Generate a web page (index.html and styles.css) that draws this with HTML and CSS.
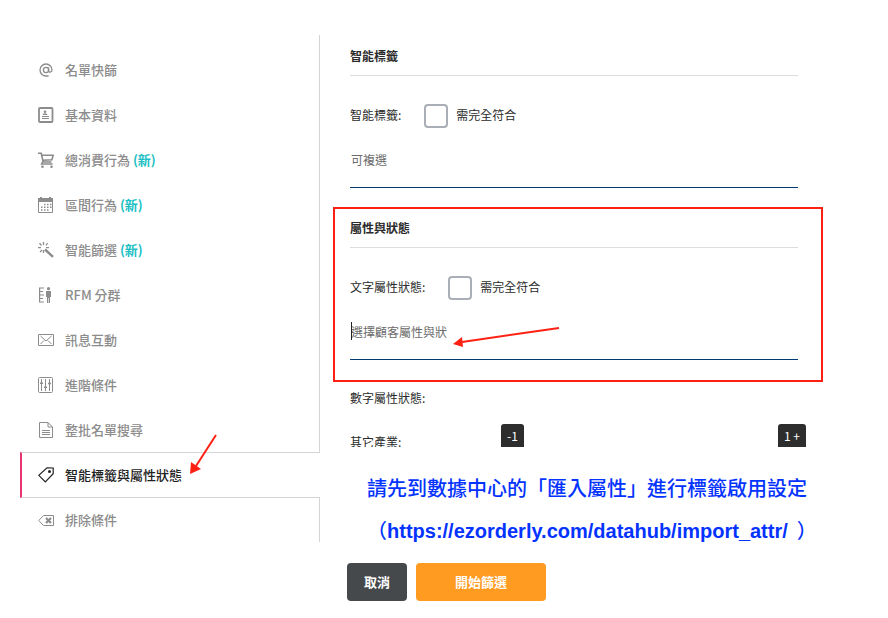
FILE: index.html
```html
<!DOCTYPE html>
<html lang="zh-Hant">
<head>
<meta charset="utf-8">
<title>智能標籤與屬性狀態</title>
<link rel="stylesheet" href="styles.css">
</head>
<body>
<div class="page">
  <nav class="sidebar">
    <a class="item" href="#"><svg class="icon" viewBox="0 0 16 16"><g stroke-width="1.3"><circle cx="8" cy="8" r="2.6"/><path d="M10.6 5.4v3.4c0 2 3.4 1.7 3.4-.8a6 6 0 1 0-6 6h2.6"/></g></svg>名單快篩</a>
    <a class="item" href="#"><svg class="icon" viewBox="0 0 16 16"><rect x="1" y="1" width="13.500" height="14" rx="1" stroke-width="1.800"/><circle cx="7" cy="4.7" r="1.3" class="fill"/><path class="fill" d="M4.500 8q0-1.800 2.500-1.800T9.500 8z"/><path d="M4 9.500h7M4 11.500h7"/></svg>基本資料</a>
    <a class="item" href="#"><svg class="icon" viewBox="0 0 16 16"><path stroke-width="1.600" d="M0 1.200h3.200l2 8.800h8.300M4 3.200h11.200l-1.300 4.600L5 8.300M4.800 9.500 3.600 12h11"/><circle class="fill" cx="4.500" cy="14.700" r="1.300"/><circle class="fill" cx="13.500" cy="14.700" r="1.300"/></svg><span>總消費行為 <b class="new">(新)</b></span></a>
    <a class="item" href="#"><svg class="icon" viewBox="0 0 16 16"><path d="M.5 1.500h14v14H.5z"/><path class="fill" d="M0 1h2V0h2v1h7V0h2v1h2v4H0z"/><path stroke-width="1.500" stroke-dasharray="1.500 1.500" d="M6 7.500h7.500M3 10.200h10.500M3 13h7.500"/></svg><span>區間行為 <b class="new">(新)</b></span></a>
    <a class="item" href="#"><svg class="icon" viewBox="0 0 16 16"><path stroke-width="2.400" d="m7 7.500 8 7.300"/><path stroke-width="1.300" d="M5.500 0v3M9.500 1.200 8 3.500M1.500 1.300l2 2.200M0 5.700h3M8 5.700h3M2 10l2-2M5.500 8v3"/></svg><span>智能篩選 <b class="new">(新)</b></span></a>
    <a class="item" href="#"><svg class="icon" viewBox="0 0 16 16"><path stroke-width="1.200" d="M6 1H1.600v14H6M2 4.500h3M2 8h4M2 11.500h3"/><circle class="fill" cx="10.500" cy="1.700" r="1.600"/><path class="fill" d="M8 4h5v6h-1v6h-1.200v-5h-.6v5H9v-6H8z"/></svg>RFM 分群</a>
    <a class="item" href="#"><svg class="icon" viewBox="0 0 16 16"><path d="M.5 2.500h15v11H.5zM2.500 4l5.500 5 5.500-5M2.500 12l3.500-3.500M13.500 12 10 8.500"/></svg>訊息互動</a>
    <a class="item" href="#"><svg class="icon" viewBox="0 0 16 16"><rect x=".5" y=".5" width="14" height="15" rx="1"/><path d="M3.500 2v12M7.500 2v12M11.500 2v12M2 6.500h3M6 10.500h3M10 6.500h3"/><path stroke-width="2" d="M2.500 6h2M6.500 10h2M10.500 6.500h2"/></svg>進階條件</a>
    <a class="item" href="#"><svg class="icon" viewBox="0 0 16 16"><path d="M1.500.5H10l4.500 4.500v10.500h-13zM10 .5V5h4.500M4 8.500h8M4 10.500h8M4 12.500h8"/></svg>整批名單搜尋</a>
    <a class="item active" href="#" aria-current="page"><svg class="icon" viewBox="0 0 16 16"><path stroke-width="1.200" d="M9 .8 15.200 1v5.700L7.300 15 .8 8.300z"/><circle class="fill" cx="11.500" cy="4.500" r="1.500"/></svg>智能標籤與屬性狀態</a>
    <a class="item" href="#"><svg class="icon" viewBox="0 0 16 16"><path d="M5.500 3.500h10v10h-10L.8 8.500z"/><path stroke-width="2.200" d="m8 6 5 5m0-5-5 5"/></svg>排除條件</a>
    <svg class="arrow arrow-nav" viewBox="0 0 30 44"><path class="shaft" d="M27 2 7 33"/><path class="head" d="m1 41 1-12 10 7z"/></svg>
  </nav>
  <main class="main">
    <form class="filters" id="filters">
      <section class="group">
        <h2>智能標籤</h2>
        <div class="row"><span class="label">智能標籤:</span><label class="check"><input type="checkbox"><span class="label">需完全符合</span></label></div>
        <input class="field" type="text" placeholder="可複選" aria-label="智能標籤">
      </section>
      <section class="group marked">
        <h2>屬性與狀態</h2>
        <div class="row"><span class="label">文字屬性狀態:</span><label class="check"><input type="checkbox"><span class="label">需完全符合</span></label></div>
        <div class="focus"><input class="field" type="text" placeholder="選擇顧客屬性與狀" aria-label="文字屬性狀態"></div>
        <svg class="arrow arrow-field" viewBox="0 0 110 22"><path class="shaft" d="M107 3 10 17"/><path class="head" d="m1 19 9-7 1 10z"/></svg>
      </section>
      <p class="numeric">數字屬性狀態:</p>
      <div class="industry"><span class="name">其它產業:</span><div class="range"><span class="tip">-1</span><span class="tip">1 +</span></div></div>
    </form>
    <p class="note">請先到數據中心的「匯入屬性」進行標籤啟用設定<br>（<a href="https://ezorderly.com/datahub/import_attr/">https://ezorderly.com/datahub/import_attr/</a>&nbsp; ）</p>
    <div class="actions"><button class="cancel" type="button">取消</button><button class="submit" type="submit" form="filters">開始篩選</button></div>
  </main>
</div>
</body>
</html>
```
FILE: styles.css
```css
* { box-sizing: border-box; }
body {
  margin: 0;
  background: #fff;
  color: #2b2b2b;
  font-family: "Noto Sans CJK TC", sans-serif;
  font-size: 12px;
  line-height: 24px;
}
h2, p { margin: 0; }
button, input { font: inherit; }
.page { display: flex; align-items: flex-start; padding: 35px 65px 16px 20px; }

.sidebar { position: relative; flex: 0 0 300px; padding-top: 12px; }
.sidebar::before { content: ""; position: absolute; inset: 0 0 0 auto; width: 1px; background: #d4d4d4; }
.item {
  position: relative;
  display: flex;
  align-items: center;
  gap: 11px;
  height: 45px;
  padding-left: 18px;
  color: #8c8c8c;
  font-size: 13px;
  font-weight: 500;
  text-decoration: none;
}
.icon { width: 16px; height: 16px; fill: none; stroke: currentColor; }
.icon .fill { fill: currentColor; stroke: none; }
.new { color: #1cbfc4; font-weight: 700; }
.active {
  height: 46px;
  margin-bottom: -1px;
  padding-left: 16px;
  border: solid #d4d4d4;
  border-width: 1px 0;
  border-left: 2px solid #e6356f;
  background: #fff;
  color: #222;
}

.main { flex: 1; min-width: 0; padding-left: 27px; }
.filters { height: 412px; margin: 0 -8px 0 -17px; padding: 1px 33px 0 20px; overflow: hidden; }
.group { position: relative; margin-bottom: 20px; }
.group h2 { height: 40px; padding-top: 8px; border-bottom: 1px solid #ddd; font-size: 12px; font-weight: 700; }
.row { display: flex; align-items: center; gap: 23px; margin-top: 28px; }
.label { padding-bottom: 2px; line-height: 22px; }
.check { display: flex; align-items: center; gap: 8px; }
.check input {
  appearance: none;
  width: 24px;
  height: 24px;
  margin: 0;
  border: 2px solid #a9aeb7;
  border-radius: 4px;
  background: #fff;
}
.field {
  display: block;
  width: 100%;
  height: 60px;
  padding: 4px 0 0 1px;
  border: 0;
  border-bottom: 1px solid #003a70;
  background: none;
  outline: 0;
}
.field::placeholder { color: #6b6b6b; opacity: 1; }
.focus { position: relative; }
.focus::before { content: ""; position: absolute; top: 22px; left: 1px; width: 1px; height: 18px; background: #222; }
.marked::after { content: ""; position: absolute; inset: -1px -25px -22px -17px; border: 2px solid #ff2014; pointer-events: none; }
.numeric { margin-top: 26px; }
.industry { display: flex; margin: 14px -8px 0 0; }
.name { flex: 0 0 151px; padding-top: 6px; }
.range { flex: 1; display: flex; justify-content: space-between; }
.tip { padding: 0 6px; border-radius: 3px; background: #2d2d2d; color: #fff; }

.note { margin: 20px 0 11px 20px; color: #0433ff; font-size: 20px; font-weight: 500; line-height: 42px; white-space: nowrap; }
.note a { color: inherit; font-family: "Liberation Sans", sans-serif; font-weight: 700; text-decoration: none; }
.actions { display: flex; gap: 9px; }
.actions button { width: 60px; height: 38px; padding: 0; border: 0; border-radius: 4px; color: #fff; font-size: 13px; font-weight: 700; }
.actions .cancel { background: #45494c; }
.actions .submit { width: 130px; background: #ff9b21; }

.arrow { position: absolute; overflow: visible; }
.shaft { fill: none; stroke: #ff2014; stroke-width: 2; }
.head { fill: #ff2014; }
.arrow-nav { top: 398px; left: 169px; width: 30px; height: 44px; }
.arrow-field { top: 117px; left: 102px; width: 110px; height: 22px; }
```
